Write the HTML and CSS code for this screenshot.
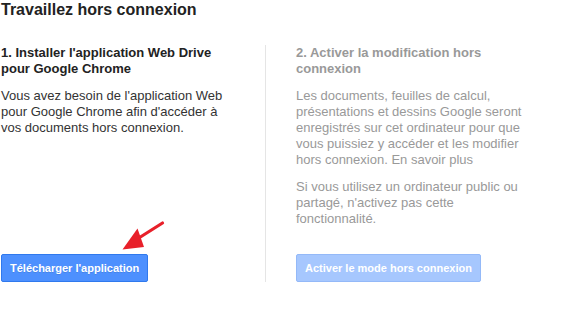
FILE: index.html
```html
<!DOCTYPE html>
<html lang="fr">
<head>
<meta charset="utf-8">
<title>Travaillez hors connexion</title>
<link rel="stylesheet" href="styles.css">
</head>
<body>
<div class="page">
  <h1 class="title">Travaillez hors connexion</h1>
  <div class="columns">
    <div class="col col-left">
      <h2 class="step-title">1. Installer l'application Web Drive pour Google Chrome</h2>
      <p class="step-text">Vous avez besoin de l'application Web pour Google Chrome afin d'accéder à vos documents hors connexion.</p>
      <div class="actions">
        <button class="btn btn-primary">Télécharger l'application</button>
      </div>
    </div>
    <div class="col col-right">
      <h2 class="step-title">2. Activer la modification hors connexion</h2>
      <p class="step-text">Les documents, feuilles de calcul, présentations et dessins Google seront enregistrés sur cet ordinateur pour que vous puissiez y accéder et les modifier hors connexion. En savoir plus</p>
      <p class="step-text">Si vous utilisez un ordinateur public ou partagé, n'activez pas cette fonctionnalité.</p>
      <div class="actions">
        <button class="btn btn-disabled">Activer le mode hors connexion</button>
      </div>
    </div>
  </div>
  <svg class="arrow" width="50" height="36" viewBox="120 218 50 36" aria-hidden="true">
    <line x1="162.5" y1="223" x2="138" y2="238.5" stroke="#e8202a" stroke-width="3.2" stroke-linecap="round"/>
    <polygon points="122.5,249.5 137.5,228.5 144,247" fill="#e8202a"/>
  </svg>
</div>
</body>
</html>
```

FILE: styles.css
```css
html, body {
  margin: 0;
  padding: 0;
  background: #fff;
}

.page {
  position: relative;
  width: 565px;
  height: 321px;
  padding-left: 1px;
  box-sizing: border-box;
  font-family: Arial, "Liberation Sans", sans-serif;
  font-size: 13px;
  line-height: 16px;
  color: #333;
}

.title {
  margin: 0;
  font-size: 16px;
  line-height: 20px;
  font-weight: bold;
  color: #222;
}

.columns {
  display: flex;
  margin-top: 25px;
}

.col {
  display: flex;
  flex-direction: column;
  width: 240px;
}

.col-left {
  padding-right: 24px;
}

.col-right {
  border-left: 1px solid #e5e5e5;
  padding-left: 30px;
  color: #999;
}

.step-title {
  margin: 0 0 11px;
  font-size: 13px;
  line-height: 16px;
  font-weight: bold;
  color: #222;
}

.col-right .step-title {
  color: #999;
}

.step-text {
  margin: 0 0 11px;
}

.actions {
  margin-top: auto;
  padding-top: 16px;
}

.btn {
  display: block;
  height: 28px;
  padding: 0 8px;
  border-radius: 2px;
  font-family: Arial, "Liberation Sans", sans-serif;
  font-size: 11px;
  font-weight: bold;
  color: #fff;
  cursor: default;
}

.btn-primary {
  background: #4d90fe;
  border: 1px solid #3079ed;
  text-shadow: 0 1px rgba(0, 0, 0, 0.1);
}

.btn-disabled {
  background: #a6c7fe;
  border: 1px solid #94b9f8;
}

.arrow {
  position: absolute;
  left: 120px;
  top: 218px;
}
```
